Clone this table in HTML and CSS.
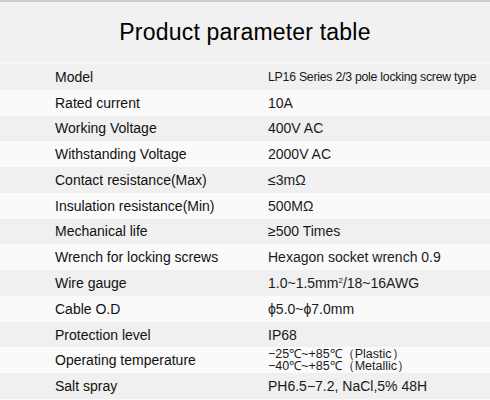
FILE: index.html
```html
<!DOCTYPE html>
<html>
<head>
<meta charset="utf-8">
<link rel="stylesheet" href="styles.css">
</head>
<body>
<div class="page">
  <div class="header"><h1 class="title">Product parameter table</h1></div>
  <div class="table">
    <div class="row alt"><div class="label">Model</div><div class="value small">LP16 Series 2/3 pole locking screw type</div></div>
    <div class="row"><div class="label">Rated current</div><div class="value">10A</div></div>
    <div class="row alt"><div class="label">Working Voltage</div><div class="value">400V AC</div></div>
    <div class="row"><div class="label">Withstanding Voltage</div><div class="value">2000V AC</div></div>
    <div class="row alt"><div class="label">Contact resistance(Max)</div><div class="value">≤3mΩ</div></div>
    <div class="row"><div class="label">Insulation resistance(Min)</div><div class="value">500MΩ</div></div>
    <div class="row alt"><div class="label">Mechanical life</div><div class="value">≥500 Times</div></div>
    <div class="row"><div class="label">Wrench for locking screws</div><div class="value">Hexagon socket wrench 0.9</div></div>
    <div class="row alt"><div class="label">Wire gauge</div><div class="value">1.0~1.5mm<sup class="sup">2</sup>/18~16AWG</div></div>
    <div class="row"><div class="label">Cable O.D</div><div class="value">ϕ5.0~ϕ7.0mm</div></div>
    <div class="row alt"><div class="label">Protection level</div><div class="value">IP68</div></div>
    <div class="row"><div class="label">Operating temperature</div><div class="value two"><div>−25℃~+85℃（Plastic）</div><div>−40℃~+85℃（Metallic）</div></div></div>
    <div class="row alt"><div class="label">Salt spray</div><div class="value">PH6.5−7.2, NaCl,5% 48H</div></div>
  </div>
</div>
</body>
</html>
```

FILE: styles.css
```css
html, body {
  margin: 0;
  padding: 0;
}
body {
  background: #fafafa;
  font-family: "Liberation Sans", Arial, sans-serif;
  color: #111;
}
.page {
  width: 490px;
  height: 400px;
  overflow: hidden;
  border-top: 2px solid #cbcbcb;
  box-sizing: border-box;
  background: #fafafa;
}
.header {
  height: 60px;
  background: #f1f1f1;
  border-bottom: 2px solid #f8f8f8;
  display: flex;
  align-items: center;
  justify-content: center;
}
.title {
  margin: 0;
  font-weight: normal;
  font-size: 23px;
  color: #000;
  letter-spacing: 0.2px;
}
.table {
  display: flex;
  flex-direction: column;
}
.row {
  height: 25.77px;
  display: flex;
  align-items: center;
  background: #fafafa;
}
.row.alt {
  background: #f0f0f0;
}
.label {
  width: 213px;
  padding-left: 55px;
  font-size: 14px;
  color: #111;
  white-space: nowrap;
}
.value {
  font-size: 14px;
  color: #1a1a1a;
  white-space: nowrap;
}
.value.small {
  font-size: 12.3px;
  letter-spacing: -0.25px;
}
.value.two {
  font-size: 12.5px;
  line-height: 12.5px;
  display: flex;
  flex-direction: column;
}
.sup {
  font-size: 8px;
  vertical-align: 5px;
  line-height: 0;
}
```
